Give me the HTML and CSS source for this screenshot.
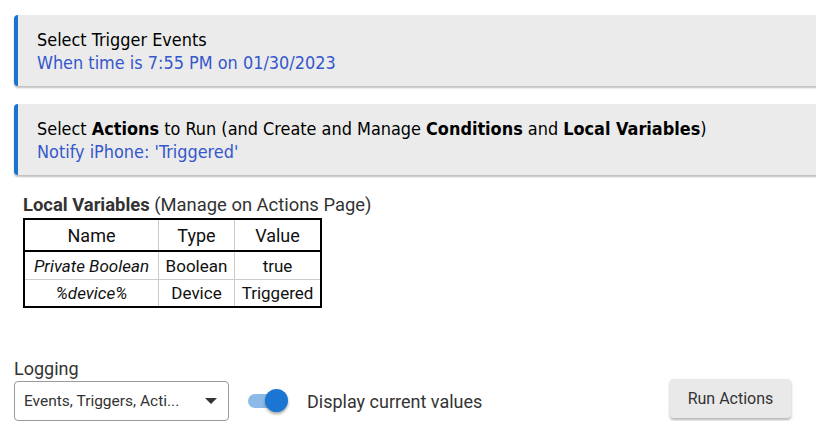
FILE: index.html
```html
<!DOCTYPE html>
<html>
<head>
<meta charset="utf-8">
<link rel="stylesheet" href="styles.css">
</head>
<body>
<div class="page">
  <div class="card">
    <div class="card-title">Select Trigger Events</div>
    <div class="card-sub">When time is 7:55 PM on 01/30/2023</div>
  </div>
  <div class="card">
    <div class="card-title">Select <b>Actions</b> to Run (and Create and Manage <b>Conditions</b> and <b>Local Variables</b>)</div>
    <div class="card-sub">Notify iPhone: 'Triggered'</div>
  </div>

  <div class="vars">
    <div class="vars-label"><b>Local Variables</b> (Manage on Actions Page)</div>
    <table class="vtable">
      <thead>
        <tr><th class="c1">Name</th><th class="c2">Type</th><th class="c3">Value</th></tr>
      </thead>
      <tbody>
        <tr class="r1"><td><i>Private Boolean</i></td><td>Boolean</td><td>true</td></tr>
        <tr class="r2"><td><i>%device%</i></td><td>Device</td><td>Triggered</td></tr>
      </tbody>
    </table>
  </div>

  <div class="controls">
    <div class="logging">
      <div class="log-label">Logging</div>
      <div class="select">
        <span class="select-text">Events, Triggers, Acti...</span>
        <span class="caret"></span>
      </div>
    </div>
    <div class="toggle-wrap">
      <span class="toggle"><span class="track"></span><span class="thumb"></span></span>
      <span class="toggle-label">Display current values</span>
    </div>
    <button class="run-btn">Run Actions</button>
  </div>
</div>
</body>
</html>
```
FILE: styles.css
```css
html, body {
  margin: 0;
  padding: 0;
  overflow: hidden;
  background: #fff;
}
.page {
  padding: 15px 0 0 14px;
  font-family: Roboto, "Liberation Sans", sans-serif;
  color: #222;
}
.card {
  background: #ebebeb;
  border-left: 4px solid #1a73cf;
  border-radius: 4px 0 0 4px;
  box-shadow: 0 2px 2px rgba(0,0,0,0.25);
  margin-right: -20px;
  height: 71px;
  box-sizing: border-box;
  padding: 13px 0 0 19px;
  margin-bottom: 18px;
  font-family: "DejaVu Sans Condensed", "DejaVu Sans", sans-serif;
  font-stretch: condensed;
  font-size: 17.9px;
  line-height: 23px;
}
.card-title { color: #000; }
.card-sub { color: #3557cc; }
.card b { font-weight: bold; }

.vars {
  padding: 1px 0 0 9px;
}
.vars-label {
  font-size: 18.4px;
  line-height: 22px;
  color: #333;
  margin-bottom: 2px;
}
.vtable {
  border-collapse: collapse;
  border: 2px solid #000;
  color: #111;
}
.vtable th, .vtable td {
  border: 1px solid #ccc;
  text-align: center;
  padding: 0;
}
.vtable th {
  font-weight: normal;
  font-size: 18px;
  height: 30px;
  border-bottom: 2px solid #000;
}
.vtable td {
  font-size: 17px;
}
.vtable .r1 td { height: 27px; }
.vtable .r2 td { height: 26px; }
.vtable .c1 { width: 133px; }
.vtable .c2 { width: 75px; }
.vtable .c3 { width: 85px; }

.controls {
  display: flex;
  align-items: flex-end;
  margin-top: 51px;
}
.log-label {
  font-size: 18px;
  line-height: 20px;
  color: #333;
  margin-bottom: 2px;
}
.select {
  width: 215px;
  height: 40px;
  box-sizing: border-box;
  border: 1px solid #9a9a9a;
  border-radius: 4px;
  display: flex;
  align-items: center;
  justify-content: space-between;
  padding: 0 10px 0 9px;
  font-size: 15.5px;
  color: #333;
}
.caret {
  width: 0;
  height: 0;
  border-left: 6px solid transparent;
  border-right: 6px solid transparent;
  border-top: 6px solid #333;
  margin-right: 1px;
}
.toggle-wrap {
  display: flex;
  align-items: center;
  height: 40px;
  margin-left: 19px;
}
.toggle {
  position: relative;
  width: 40px;
  height: 24px;
  display: inline-block;
}
.track {
  position: absolute;
  left: 0;
  top: 5px;
  width: 34px;
  height: 14px;
  border-radius: 7px;
  background: #8db9e8;
}
.thumb {
  position: absolute;
  right: 0;
  top: 0;
  width: 23px;
  height: 23px;
  border-radius: 50%;
  background: #1a76d2;
  box-shadow: 0 2px 3px rgba(0,0,0,0.35);
}
.toggle-label {
  margin-left: 19px;
  font-size: 18px;
  color: #333;
}
.run-btn {
  margin-left: auto;
  margin-right: 25px;
  margin-bottom: 3px;
  width: 121px;
  height: 39px;
  border: none;
  border-radius: 4px;
  background: #e9e9e9;
  box-shadow: 0 2px 3px rgba(0,0,0,0.3);
  font-family: Roboto, sans-serif;
  font-size: 16px;
  color: #333;
  padding: 0;
}
```
